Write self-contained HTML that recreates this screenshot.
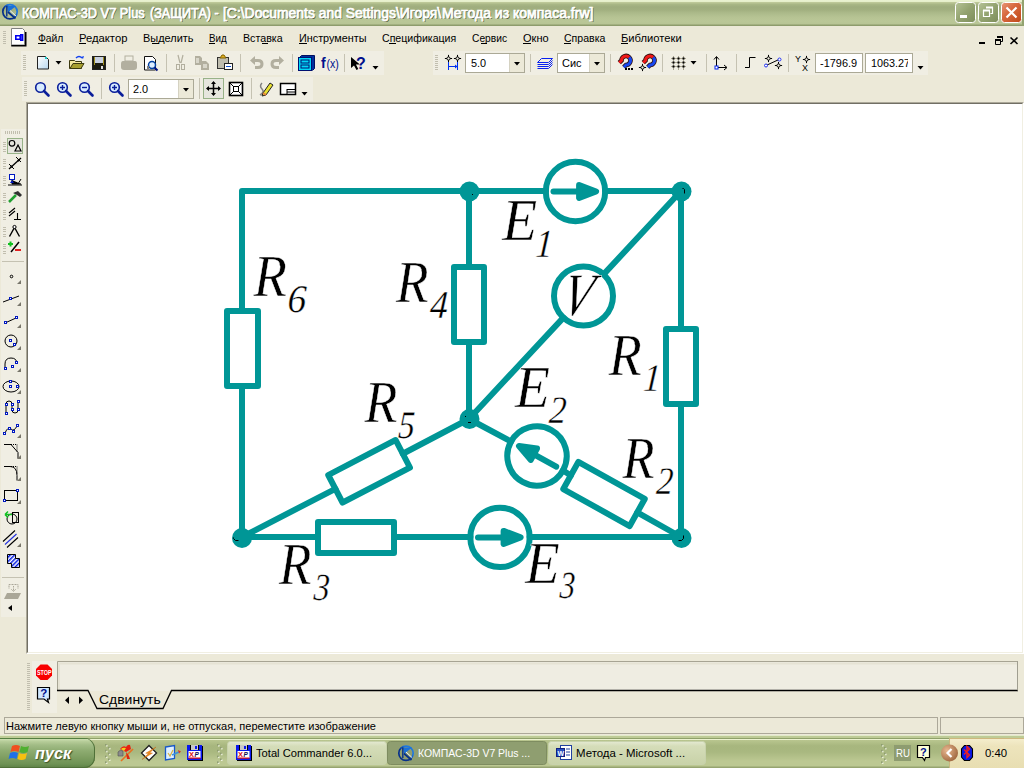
<!DOCTYPE html>
<html><head><meta charset="utf-8"><style>
*{box-sizing:border-box}
html,body{margin:0;padding:0}
body{width:1024px;height:768px;overflow:hidden;position:relative;background:#ECE9D8;font-family:"Liberation Sans",sans-serif;font-size:11px;color:#000}
.a{position:absolute}
.t{white-space:nowrap;line-height:1}
</style></head><body>
<svg width="0" height="0" style="position:absolute"><defs>
<linearGradient id="gOlive" x1="0" y1="0" x2="1" y2="1"><stop offset="0" stop-color="#B5C396"/><stop offset="0.5" stop-color="#93A370"/><stop offset="1" stop-color="#7D8D5A"/></linearGradient>
<linearGradient id="gRed" x1="0" y1="0" x2="1" y2="1"><stop offset="0" stop-color="#E89878"/><stop offset="0.4" stop-color="#D86A40"/><stop offset="1" stop-color="#C04818"/></linearGradient>
<linearGradient id="gDoc" x1="0" y1="0" x2="1" y2="1"><stop offset="0" stop-color="#fff"/><stop offset="1" stop-color="#B8D8F0"/></linearGradient>
<linearGradient id="gTask" x1="0" y1="0" x2="0" y2="1"><stop offset="0" stop-color="#E4E9D2"/><stop offset="0.2" stop-color="#D5DDB9"/><stop offset="1" stop-color="#C8D2A8"/></linearGradient>
<linearGradient id="gLogo" x1="1" y1="0" x2="0" y2="1"><stop offset="0.3" stop-color="#1E78E0"/><stop offset="0.6" stop-color="#06308A"/></linearGradient>
<radialGradient id="gBrown" cx="0.35" cy="0.35" r="0.7"><stop offset="0" stop-color="#E8B890"/><stop offset="1" stop-color="#A06840"/></radialGradient>
<pattern id="hatch" width="3" height="3" patternUnits="userSpaceOnUse" patternTransform="rotate(45)"><rect width="3" height="3" fill="#fff"/><rect width="1.5" height="3" fill="#0018E0"/></pattern>
</defs></svg>
<div class="a" style="left:0;top:0;width:1024px;height:26px;background:linear-gradient(#EAF2D2 0px,#E6EFCB 1.5px,#BDC898 2.5px,#A8B685 4.5px,#9FAD7E 7px,#A2B080 10px,#ACBA8A 13px,#B6C393 17px,#BAC797 21px,#B8C595 24px,#8E9C6C 25px,#8E9C6C 26px)"></div>
<div class="a" style="left:21px;top:51px;width:363px;height:24px;background:#F0EEE3"></div>
<div class="a" style="left:433px;top:51px;width:495px;height:24px;background:#F0EEE3"></div>
<div class="a" style="left:22px;top:77px;width:291px;height:24px;background:#F0EEE3"></div>
<div class="a" style="left:1px;top:129px;width:25px;height:488px;background:#F0EEE3"></div>
<div class="a" style="left:26px;top:102px;width:998px;height:552px;border-top:1px solid #ACA899;border-left:1px solid #ACA899;border-right:1px solid #fff;border-bottom:1px solid #fff;background:#fff"><div style="width:996px;height:550px;border-top:1px solid #716F64;border-left:1px solid #716F64;border-right:1px solid #F1EFE2;border-bottom:1px solid #F1EFE2"></div></div>
<div class="a" style="left:32px;top:661px;width:25px;height:52px;background:#F0EEE3"></div>
<div class="a" style="left:58px;top:661px;width:960px;height:30px;background:#EFEDE2"></div>
<div class="a" style="left:4px;top:717px;width:934px;height:17px;border:1px solid #ACA899"></div>
<div class="a" style="left:940px;top:717px;width:84px;height:17px;border:1px solid #ACA899"></div>
<div class="a" style="left:0;top:735px;width:1024px;height:33px;background:linear-gradient(#E2E9C9 0px,#E2E9C9 1px,#BECB96 1px,#BECB96 3px,#8FA16A 3px,#8FA16A 4px,#ECF2D0 4px,#ECF2D0 5px,#B9C68F 5px,#A7B67E 11px,#A9B880 17px,#BCC892 26px,#BCC892 31px,#96A470 32px)"></div>
<div class="a" style="left:0;top:738px;width:95px;height:30px;border-radius:0 11px 11px 0;background:linear-gradient(#557F42 0,#557F42 1px,#CFE0B4 1px,#B9CF9C 3px,#A2BC86 7px,#8DAB70 13px,#7D9D60 20px,#6E9254 26px,#5B8045 30px);box-shadow:inset -1px 0 0 #4F7038,inset 0 -1px 0 #4F7038"></div>
<div class="a" style="left:949px;top:738px;width:75px;height:30px;background:linear-gradient(#CDB87E 0,#CDB87E 1px,#F4EDCC 1px,#EDE4BC 8px,#E8DEB2);border-left:1px solid #C8B880"></div>
<svg class="a" style="left:0;top:0" width="1024" height="768" viewBox="0 0 1024 768">
<circle cx="10" cy="11.75" r="7.2" fill="none" stroke="url(#gLogo)" stroke-width="1.7"/>
<path d="M7,6 h9 l-8,6.5z" fill="#1A70D8"/><path d="M6.8,6 v10.5" stroke="#06308A" stroke-width="1.4"/><path d="M8,12 l7.5,6.5" stroke="#06308A" stroke-width="1.8"/><path d="M10,10.5 l6,5.5" stroke="#E8F0FF" stroke-width="1"/>
<rect x="955.5" y="2.5" width="20" height="20" rx="3" fill="url(#gOlive)" stroke="#fff" stroke-width="1"/>
<rect x="978.5" y="2.5" width="20" height="20" rx="3" fill="url(#gOlive)" stroke="#fff" stroke-width="1"/>
<rect x="1001.5" y="2.5" width="20" height="20" rx="3" fill="url(#gRed)" stroke="#fff" stroke-width="1"/>
<rect x="960" y="15" width="7" height="3" fill="#fff"/>
<path d="M986.5,7.5 h6 v6 h-2 M983.5,10.5 h6 v6 h-6 z" fill="none" stroke="#fff" stroke-width="1.2"/><rect x="983" y="9.5" width="7" height="2" fill="#fff"/><rect x="986" y="6.5" width="7" height="2" fill="#fff"/>
<path d="M1006.5,7.5 l10,10 M1016.5,7.5 l-10,10" stroke="#fff" stroke-width="2.2"/>
<rect x="1022" y="0" width="2" height="26" fill="#93A370"/>
<rect x="3" y="31" width="3" height="1" fill="#C1BEAE"/><rect x="3" y="33" width="3" height="1" fill="#C1BEAE"/><rect x="3" y="35" width="3" height="1" fill="#C1BEAE"/><rect x="3" y="37" width="3" height="1" fill="#C1BEAE"/><rect x="3" y="39" width="3" height="1" fill="#C1BEAE"/><rect x="3" y="41" width="3" height="1" fill="#C1BEAE"/><rect x="3" y="43" width="3" height="1" fill="#C1BEAE"/>
<path d="M11.5,28.5 h11 l2,2 v14.5 h-13 z" fill="#fff" stroke="#808080"/><path d="M25.75,32 v13.75 h-14.5" stroke="#000" stroke-width="1.5" fill="none"/><path d="M15.8,35.8 h4.4 v3.4 h-4.4z M20.8,34.8 h1.8 v5.4 h-1.8z" stroke="#0000F0" stroke-width="1.6" fill="#fff"/>
<rect x="979" y="42" width="6" height="2" fill="#000"/>
<path d="M997.5,36.5 h5 v5 h-2 M995.5,39.5 h5 v5 h-5 z" fill="none" stroke="#000"/><rect x="995" y="39" width="6" height="2" fill="#000"/><rect x="997" y="36" width="6" height="2" fill="#000"/>
<path d="M1010.5,37.5 l7,6.5 M1017.5,37.5 l-7,6.5" stroke="#000" stroke-width="1.6"/>
<rect x="23" y="55" width="3" height="1" fill="#C1BEAE"/><rect x="23" y="57" width="3" height="1" fill="#C1BEAE"/><rect x="23" y="59" width="3" height="1" fill="#C1BEAE"/><rect x="23" y="61" width="3" height="1" fill="#C1BEAE"/><rect x="23" y="63" width="3" height="1" fill="#C1BEAE"/><rect x="23" y="65" width="3" height="1" fill="#C1BEAE"/><rect x="23" y="67" width="3" height="1" fill="#C1BEAE"/><rect x="23" y="69" width="3" height="1" fill="#C1BEAE"/>
<path d="M37.5,56.5 h8 l3,3 v9.5 h-11 z" fill="url(#gDoc)" stroke="#222"/><rect x="45" y="57" width="2" height="2" fill="#2CC"/>
<path d="M55.5,61h6l-3,3.5z" fill="#000"/>
<path d="M69.5,60.5 h5 l1,1 h6 v7 h-12 z" fill="#F4E9A0" stroke="#3C3A10"/><path d="M70,68.5 l3,-5 h11 l-3,5 z" fill="#A8A030" stroke="#3C3A10"/><path d="M76,58 q3,-3 6,0" stroke="#1040F0" stroke-width="1.5" fill="none"/><path d="M81,57 l2,2 l1,-3z" fill="#1040F0"/>
<rect x="92.5" y="56.5" width="13" height="13" fill="#1C1C10" stroke="#222"/><rect x="95" y="57" width="8" height="6" fill="#C8D0E0"/><rect x="94" y="57" width="1" height="8" fill="#A09020"/><rect x="103" y="57" width="1" height="8" fill="#A09020"/><rect x="101" y="66" width="2" height="3" fill="#E0E0E0"/>
<rect x="114" y="54" width="1" height="18" fill="#C5C2B2"/>
<path d="M123,61 h12 q2,0 2,3 v3 q0,3 -3,3 h-10 q-3,0 -3,-3 v-3 q0,-3 2,-3z" fill="#B2AF9F"/><rect x="125" y="56" width="8" height="5" fill="none" stroke="#B2AF9F"/>
<path d="M144.5,56.5 h8 l3,3 v10.5 h-11 z" fill="#fff" stroke="#111"/><circle cx="152" cy="65" r="3.5" fill="#DDEEFF" stroke="#0040A0" stroke-width="1.5"/><path d="M154.5,67.5 l3,3" stroke="#001080" stroke-width="2"/><rect x="147" y="66" width="2" height="3" fill="#808080"/>
<rect x="166" y="54" width="1" height="18" fill="#C5C2B2"/>
<path d="M178,55 l2,8 M183,55 l-2,8" stroke="#B2AF9F" stroke-width="1.2"/><rect x="176.5" y="64.5" width="3" height="5" fill="none" stroke="#B2AF9F"/><rect x="181.5" y="64.5" width="3" height="5" fill="none" stroke="#B2AF9F"/>
<path d="M195,56 h5 l2,2 v7 h-7z" fill="#B2AF9F"/><path d="M201,61 h5 l3,3 v6 h-8z" fill="#B2AF9F"/><rect x="196" y="58" width="3" height="5" fill="#D8D6CA"/><rect x="203" y="64" width="4" height="4" fill="#D8D6CA"/>
<rect x="217.5" y="57.5" width="11" height="11" fill="#BEBCAE" stroke="#333"/><path d="M220,58 l2,-3 h2 l2,3z" fill="#E0B020" stroke="#806000"/><rect x="224.5" y="63.5" width="8" height="6" fill="#fff" stroke="#222"/><rect x="226" y="66" width="5" height="1" fill="#1050D0"/>
<rect x="240" y="54" width="1" height="18" fill="#C5C2B2"/>
<path d="M254,60.5 h4 q4,0 4,3.5 q0,3.5 -4,3.5 h-3" stroke="#B2AF9F" stroke-width="3" fill="none"/><path d="M250,60.5 l5,-4.5 v9z" fill="#B2AF9F"/>
<path d="M280,60.5 h-4 q-4,0 -4,3.5 q0,3.5 4,3.5 h3" stroke="#B2AF9F" stroke-width="3" fill="none"/><path d="M284,60.5 l-5,-4.5 v9z" fill="#B2AF9F"/>
<rect x="292" y="54" width="1" height="18" fill="#C5C2B2"/>
<path d="M299.5,57.5 l2,-2 h13 v13 l-2,2" fill="#0030A0" stroke="#001060"/><rect x="298.5" y="57.5" width="13" height="13" fill="#00D8F8" stroke="#001070"/><rect x="301" y="60" width="8" height="3" fill="none" stroke="#001070"/><rect x="301" y="65" width="8" height="3" fill="none" stroke="#001070"/>
<text x="321" y="68" font-family="Liberation Sans" font-weight="bold" font-size="14" fill="#00108C">f</text><text x="0" y="68" font-family="Liberation Sans" font-size="12.5" fill="#00108C" transform="translate(326.5,0) scale(0.85,1)">(x)</text>
<rect x="344" y="54" width="1" height="18" fill="#C5C2B2"/>
<path d="M351,57 v11 l3,-2.5 l2.5,4.5 l1.8,-1 l-2.4,-4.4 h4z" fill="#000"/>
<text x="356" y="68.5" font-family="Liberation Sans" font-weight="bold" font-size="16" fill="#00108C">?</text>
<path d="M372.5,66h6l-3,3.5z" fill="#000"/>
<rect x="435" y="55" width="3" height="1" fill="#C1BEAE"/><rect x="435" y="57" width="3" height="1" fill="#C1BEAE"/><rect x="435" y="59" width="3" height="1" fill="#C1BEAE"/><rect x="435" y="61" width="3" height="1" fill="#C1BEAE"/><rect x="435" y="63" width="3" height="1" fill="#C1BEAE"/><rect x="435" y="65" width="3" height="1" fill="#C1BEAE"/><rect x="435" y="67" width="3" height="1" fill="#C1BEAE"/><rect x="435" y="69" width="3" height="1" fill="#C1BEAE"/>
<circle cx="448.5" cy="58.5" r="1.6" fill="none" stroke="#000" stroke-width="1"/><path d="M444.9,58.5H446.9M450.1,58.5H452.1M448.5,54.9V56.9M448.5,60.1V62.1" stroke="#000" stroke-width="1"/><circle cx="457.5" cy="58.5" r="1.6" fill="none" stroke="#000" stroke-width="1"/><path d="M453.9,58.5H455.9M459.1,58.5H461.1M457.5,54.9V56.9M457.5,60.1V62.1" stroke="#000" stroke-width="1"/><path d="M448.5,62v8M457.5,62v8M448,66.5h10" stroke="#0030F0" fill="none"/><path d="M455,64.5l2.5,2l-2.5,2z" fill="#0030F0"/>
<rect x="465.5" y="53.5" width="59" height="19" fill="#fff" stroke="#ABA996"/><rect x="509" y="54" width="15" height="18" fill="#ECE9D8"/><rect x="509" y="54" width="1" height="18" fill="#D5D2C2"/><path d="M514.0,62.0h6l-3,3.5z" fill="#000"/>
<rect x="530" y="54" width="1" height="18" fill="#C5C2B2"/>
<g stroke="#0820F0" fill="none" stroke-width="1"><path d="M541.5,58.5h11l-4,4h-11z"/><path d="M537.5,64.5h11l4,-4"/><path d="M537.5,66.5h11l4,-4"/><path d="M537.5,68.5h11l4,-4"/></g>
<rect x="557.5" y="53.5" width="47" height="19" fill="#fff" stroke="#ABA996"/><rect x="589" y="54" width="15" height="18" fill="#ECE9D8"/><rect x="589" y="54" width="1" height="18" fill="#D5D2C2"/><path d="M594.0,62.0h6l-3,3.5z" fill="#000"/>
<rect x="610" y="54" width="1" height="18" fill="#C5C2B2"/>
<path d="M619.30,62.70 L621.50,60.50 A4.5,4.5 0 0 1 629.18,57.32 A4.5,4.5 0 0 1 626.00,65.00 L623.80,67.20" stroke="#301010" stroke-width="4.6" fill="none"/><path d="M619.30,62.70 L621.50,60.50 A4.5,4.5 0 0 1 629.18,57.32" stroke="#F01818" stroke-width="3" fill="none"/><path d="M629.18,57.32 A4.5,4.5 0 0 1 626.00,65.00 L623.80,67.20" stroke="#1848F0" stroke-width="3" fill="none"/><rect x="625" y="68" width="2" height="2" fill="#000"/><rect x="628" y="68" width="2" height="2" fill="#000"/><rect x="631" y="68" width="2" height="2" fill="#000"/>
<path d="M643.30,62.70 L645.50,60.50 A4.5,4.5 0 0 1 653.18,57.32 A4.5,4.5 0 0 1 650.00,65.00 L647.80,67.20" stroke="#301010" stroke-width="4.6" fill="none"/><path d="M643.30,62.70 L645.50,60.50 A4.5,4.5 0 0 1 653.18,57.32" stroke="#F01818" stroke-width="3" fill="none"/><path d="M653.18,57.32 A4.5,4.5 0 0 1 650.00,65.00 L647.80,67.20" stroke="#1848F0" stroke-width="3" fill="none"/><circle cx="642.5" cy="67.5" r="1.6" fill="none" stroke="#000" stroke-width="1"/><path d="M638.9,67.5H640.9M644.1,67.5H646.1M642.5,63.9V65.9M642.5,69.1V71.1" stroke="#000" stroke-width="1"/>
<rect x="662" y="54" width="1" height="18" fill="#C5C2B2"/>
<g stroke="#ABA792" stroke-width="1"><path d="M671,58.5h15M671,62.5h15M671,66.5h15M673.5,56v14M678.5,56v14M683.5,56v14"/></g><rect x="672.5" y="57.5" width="2" height="2" fill="#000"/><rect x="672.5" y="61.5" width="2" height="2" fill="#000"/><rect x="672.5" y="65.5" width="2" height="2" fill="#000"/><rect x="677.5" y="57.5" width="2" height="2" fill="#000"/><rect x="677.5" y="61.5" width="2" height="2" fill="#000"/><rect x="677.5" y="65.5" width="2" height="2" fill="#000"/><rect x="682.5" y="57.5" width="2" height="2" fill="#000"/><rect x="682.5" y="61.5" width="2" height="2" fill="#000"/><rect x="682.5" y="65.5" width="2" height="2" fill="#000"/>
<path d="M690.5,61h6l-3,3.5z" fill="#000"/>
<rect x="706" y="54" width="1" height="18" fill="#C5C2B2"/>
<path d="M716.5,68 v-11 M714,59.5 l2.5,-3 l2.5,3 M716.5,67.5 h10 M724,65 l3,2.5 l-3,2.5" stroke="#000" fill="none"/><rect x="715" y="66" width="3" height="3" fill="#fff" stroke="#0020F0"/>
<rect x="736" y="54" width="1" height="18" fill="#C5C2B2"/>
<path d="M745,67.5 h4.5 v-10 h6" stroke="#000" fill="none"/>
<circle cx="768.5" cy="58.5" r="1.6" fill="none" stroke="#000" stroke-width="1"/><path d="M764.9,58.5H766.9M770.1,58.5H772.1M768.5,54.9V56.9M768.5,60.1V62.1" stroke="#000" stroke-width="1"/><circle cx="778.5" cy="65.5" r="1.6" fill="none" stroke="#000" stroke-width="1"/><path d="M774.9,65.5H776.9M780.1,65.5H782.1M778.5,61.9V63.9M778.5,67.1V69.1" stroke="#000" stroke-width="1"/><path d="M766,65.5 l13,-6" stroke="#000"/><circle cx="766" cy="65.5" r="1.5" fill="#fff" stroke="#2030F0"/><circle cx="779.5" cy="59.5" r="1.5" fill="#fff" stroke="#2030F0"/>
<rect x="788" y="54" width="1" height="18" fill="#C5C2B2"/>
<text x="795" y="62" font-family="Liberation Sans" font-size="9" fill="#000">Y</text><text x="802" y="71" font-family="Liberation Sans" font-size="9" fill="#000">X</text><circle cx="806.5" cy="59.5" r="1.6" fill="none" stroke="#000" stroke-width="1"/><path d="M802.9,59.5H804.9M808.1,59.5H810.1M806.5,55.9V57.9M806.5,61.1V63.1" stroke="#000" stroke-width="1"/>
<rect x="815.5" y="53.5" width="47" height="19" fill="#fff" stroke="#ABA996"/>
<rect x="865.5" y="53.5" width="47" height="19" fill="#fff" stroke="#ABA996"/>
<path d="M917.5,66h6l-3,3.5z" fill="#000"/>
<rect x="24" y="81" width="3" height="1" fill="#C1BEAE"/><rect x="24" y="83" width="3" height="1" fill="#C1BEAE"/><rect x="24" y="85" width="3" height="1" fill="#C1BEAE"/><rect x="24" y="87" width="3" height="1" fill="#C1BEAE"/><rect x="24" y="89" width="3" height="1" fill="#C1BEAE"/><rect x="24" y="91" width="3" height="1" fill="#C1BEAE"/><rect x="24" y="93" width="3" height="1" fill="#C1BEAE"/><rect x="24" y="95" width="3" height="1" fill="#C1BEAE"/>
<circle cx="40.5" cy="87.5" r="4.8" fill="#D8ECFF" stroke="#0A1E9A" stroke-width="1.6"/><path d="M44,91 l4.5,4.5" stroke="#0A1E9A" stroke-width="2.6" stroke-linecap="round"/>
<circle cx="62.5" cy="87.5" r="4.8" fill="#D8ECFF" stroke="#0A1E9A" stroke-width="1.6"/><path d="M66,91 l4.5,4.5" stroke="#0A1E9A" stroke-width="2.6" stroke-linecap="round"/><path d="M60,87.5h5M62.5,85v5" stroke="#0A1E9A" stroke-width="1.4"/>
<circle cx="84.5" cy="87.5" r="4.8" fill="#D8ECFF" stroke="#0A1E9A" stroke-width="1.6"/><path d="M88,91 l4.5,4.5" stroke="#0A1E9A" stroke-width="2.6" stroke-linecap="round"/><path d="M82,87.5h5" stroke="#0A1E9A" stroke-width="1.4"/>
<rect x="101" y="78" width="1" height="21" fill="#C5C2B2"/>
<circle cx="114.5" cy="87.5" r="4.8" fill="#D8ECFF" stroke="#0A1E9A" stroke-width="1.6"/><path d="M118,91 l4.5,4.5" stroke="#0A1E9A" stroke-width="2.6" stroke-linecap="round"/><path d="M112,87.5h5M114.5,85v5" stroke="#0A1E9A" stroke-width="1.4"/>
<rect x="128.5" y="79.5" width="65" height="19" fill="#fff" stroke="#ABA996"/><rect x="178" y="80" width="15" height="18" fill="#ECE9D8"/><rect x="178" y="80" width="1" height="18" fill="#D5D2C2"/><path d="M183.0,88.0h6l-3,3.5z" fill="#000"/>
<rect x="199" y="78" width="1" height="21" fill="#C5C2B2"/>
<rect x="203.5" y="78.5" width="20" height="20" fill="#E6E6DE" stroke="#98B288"/>
<path d="M213.5,82 v13 M207,88.5 h13" stroke="#000" stroke-width="1.5"/><path d="M211,84 l2.5,-3 l2.5,3z M211,93 l2.5,3 l2.5,-3z M209,86 l-3,2.5 l3,2.5z M218,86 l3,2.5 l-3,2.5z" fill="#000"/>
<rect x="229.5" y="82.5" width="13" height="13" fill="#fff" stroke="#000" stroke-width="1.6"/><rect x="233.5" y="86.5" width="5" height="5" fill="none" stroke="#000"/><path d="M230,83 l4,4 M242,83 l-4,4 M230,95 l4,-4 M242,95 l-4,-4" stroke="#000"/>
<rect x="251" y="78" width="1" height="21" fill="#C5C2B2"/>
<path d="M262,83 q-3,3 0,6 q3,3 -2,6" stroke="#808080" stroke-width="1.5" fill="none"/><path d="M263,93 l7,-10 l3,2 l-7,10 l-4,1z" fill="#E8E030" stroke="#222"/><path d="M263,93l3,2" stroke="#E08040" stroke-width="2"/>
<rect x="280.5" y="83.5" width="15" height="11" fill="#fff" stroke="#000" stroke-width="1.5"/><path d="M287,89.5 h8 M287,92 h8 M287,89 v5.5" stroke="#000"/>
<path d="M301.5,92h6l-3,3.5z" fill="#000"/>
<rect x="5" y="131" width="1" height="3" fill="#C1BEAE"/><rect x="7" y="131" width="1" height="3" fill="#C1BEAE"/><rect x="9" y="131" width="1" height="3" fill="#C1BEAE"/><rect x="11" y="131" width="1" height="3" fill="#C1BEAE"/><rect x="13" y="131" width="1" height="3" fill="#C1BEAE"/><rect x="15" y="131" width="1" height="3" fill="#C1BEAE"/><rect x="17" y="131" width="1" height="3" fill="#C1BEAE"/><rect x="19" y="131" width="1" height="3" fill="#C1BEAE"/>
<rect x="7.5" y="138.5" width="15" height="15" fill="#E6E6DE" stroke="#98B288"/>
<rect x="3" y="142" width="3" height="1" fill="#C1BEAE"/><rect x="3" y="144" width="3" height="1" fill="#C1BEAE"/><rect x="3" y="146" width="3" height="1" fill="#C1BEAE"/><rect x="3" y="149" width="3" height="1" fill="#C1BEAE"/><rect x="3" y="151" width="3" height="1" fill="#C1BEAE"/>
<rect x="3" y="159" width="3" height="1" fill="#C1BEAE"/><rect x="3" y="161" width="3" height="1" fill="#C1BEAE"/><rect x="3" y="163" width="3" height="1" fill="#C1BEAE"/><rect x="3" y="166" width="3" height="1" fill="#C1BEAE"/><rect x="3" y="168" width="3" height="1" fill="#C1BEAE"/>
<rect x="3" y="176" width="3" height="1" fill="#C1BEAE"/><rect x="3" y="178" width="3" height="1" fill="#C1BEAE"/><rect x="3" y="180" width="3" height="1" fill="#C1BEAE"/><rect x="3" y="183" width="3" height="1" fill="#C1BEAE"/><rect x="3" y="185" width="3" height="1" fill="#C1BEAE"/>
<rect x="3" y="193" width="3" height="1" fill="#C1BEAE"/><rect x="3" y="195" width="3" height="1" fill="#C1BEAE"/><rect x="3" y="197" width="3" height="1" fill="#C1BEAE"/><rect x="3" y="200" width="3" height="1" fill="#C1BEAE"/><rect x="3" y="202" width="3" height="1" fill="#C1BEAE"/>
<rect x="3" y="210" width="3" height="1" fill="#C1BEAE"/><rect x="3" y="212" width="3" height="1" fill="#C1BEAE"/><rect x="3" y="214" width="3" height="1" fill="#C1BEAE"/><rect x="3" y="217" width="3" height="1" fill="#C1BEAE"/><rect x="3" y="219" width="3" height="1" fill="#C1BEAE"/>
<rect x="3" y="227" width="3" height="1" fill="#C1BEAE"/><rect x="3" y="229" width="3" height="1" fill="#C1BEAE"/><rect x="3" y="231" width="3" height="1" fill="#C1BEAE"/><rect x="3" y="234" width="3" height="1" fill="#C1BEAE"/><rect x="3" y="236" width="3" height="1" fill="#C1BEAE"/>
<rect x="3" y="244" width="3" height="1" fill="#C1BEAE"/><rect x="3" y="246" width="3" height="1" fill="#C1BEAE"/><rect x="3" y="248" width="3" height="1" fill="#C1BEAE"/><rect x="3" y="251" width="3" height="1" fill="#C1BEAE"/><rect x="3" y="253" width="3" height="1" fill="#C1BEAE"/>
<circle cx="12" cy="143.3" r="2.8" fill="none" stroke="#000" stroke-width="1.2"/><path d="M18,145 l3,6 h-6z" fill="none" stroke="#000" stroke-width="1.2"/>
<path d="M9,169 l12,-11" stroke="#000" stroke-width="1.3"/><path d="M9,164 l5,5 M16,157 l5,5" stroke="#000"/><path d="M10,168 l3,-1 l-2,-2z M20,159 l-3,1 l2,2z" fill="#000"/>
<rect x="9.5" y="174.5" width="5" height="5" fill="#fff" stroke="#0018C0"/><path d="M12,180 v4 h9 M8,185h14" stroke="#000"/><path d="M10,183 l2,-3 l2,3z" fill="#0018C0"/><path d="M16,182 l2,2 l3,-5" stroke="#000" fill="none"/>
<path d="M13,193 l5,-2 l4,4 l-2,2 l-3,-2z" fill="#303030"/><path d="M16,195 l-7,7" stroke="#20A030" stroke-width="2.5"/>
<path d="M9,213 l6,-5 M9,216 l6,-5 M17.5,213 v7 M14,219.5h7" stroke="#000" stroke-width="1.1" fill="none"/>
<path d="M9.5,236.5 l5,-9 l5,9" stroke="#000" stroke-width="1.4" fill="none"/><circle cx="14.5" cy="227" r="1.6" fill="#fff" stroke="#000"/>
<path d="M11,252 l8,-10" stroke="#000" stroke-width="1.5"/><path d="M8,244h5M10.5,241.5v5" stroke="#10C020" stroke-width="2"/><rect x="15" y="249" width="6" height="2" fill="#E02020"/>
<rect x="2" y="261" width="22" height="1" fill="#C5C2B2"/>
<circle cx="11.5" cy="276.5" r="1.3" fill="none" stroke="#000"/><path d="M17,284 h4 v-4z" fill="#77756A"/>
<path d="M3,302 l16,-6" stroke="#000"/><rect x="9.5" y="297.5" width="2" height="2" fill="#fff" stroke="#0018C0"/><path d="M17,306 h4 v-4z" fill="#77756A"/>
<path d="M5,323 l11,-5" stroke="#000"/><rect x="4.5" y="321.5" width="2" height="2" fill="#fff" stroke="#0018C0"/><rect x="15.5" y="316.5" width="2" height="2" fill="#fff" stroke="#0018C0"/><path d="M17,328 h4 v-4z" fill="#77756A"/>
<circle cx="11" cy="341" r="6" fill="none" stroke="#000"/><rect x="9.5" y="339.5" width="2" height="2" fill="#fff" stroke="#0018C0"/><rect x="13.5" y="343.5" width="2" height="2" fill="#fff" stroke="#0018C0"/><path d="M17,350 h4 v-4z" fill="#77756A"/>
<path d="M5,368 v-4 q0,-6 6,-6 q6,0 6,6" stroke="#000" fill="none"/><rect x="4.5" y="367.5" width="2" height="2" fill="#fff" stroke="#0018C0"/><rect x="11.5" y="365.5" width="2" height="2" fill="#fff" stroke="#0018C0"/><rect x="15.5" y="361.5" width="2" height="2" fill="#fff" stroke="#0018C0"/><path d="M17,372 h4 v-4z" fill="#77756A"/>
<ellipse cx="11" cy="386.5" rx="8" ry="5.5" fill="none" stroke="#000"/><rect x="9.5" y="380.5" width="2" height="2" fill="#fff" stroke="#0018C0"/><rect x="9.5" y="385.5" width="2" height="2" fill="#fff" stroke="#0018C0"/><rect x="16.5" y="385.5" width="2" height="2" fill="#fff" stroke="#0018C0"/><path d="M17,394 h4 v-4z" fill="#77756A"/>
<path d="M6,414 v-10 q0,-3 3,-3 q3,0 3,3 v6 q0,3 3,3 q3,0 3,-3 v-8" stroke="#000" fill="none"/><rect x="5.5" y="403.5" width="2" height="2" fill="#fff" stroke="#0018C0"/><rect x="5.5" y="412.5" width="2" height="2" fill="#fff" stroke="#0018C0"/><rect x="11.5" y="403.5" width="2" height="2" fill="#fff" stroke="#0018C0"/><rect x="11.5" y="408.5" width="2" height="2" fill="#fff" stroke="#0018C0"/><rect x="17.5" y="400.5" width="2" height="2" fill="#fff" stroke="#0018C0"/><rect x="17.5" y="408.5" width="2" height="2" fill="#fff" stroke="#0018C0"/>
<path d="M5,433 q3,-7 6,-4 q3,3 6,-3" stroke="#000" fill="none"/><rect x="3.5" y="432.5" width="2" height="2" fill="#fff" stroke="#0018C0"/><rect x="8.5" y="427.5" width="2" height="2" fill="#fff" stroke="#0018C0"/><rect x="12.5" y="430.5" width="2" height="2" fill="#fff" stroke="#0018C0"/><rect x="16.5" y="424.5" width="2" height="2" fill="#fff" stroke="#0018C0"/><path d="M17,438 h4 v-4z" fill="#77756A"/>
<path d="M4,444.5 h7 l7,8 v6" stroke="#000" fill="none"/><path d="M11,444.5 h6 v8" stroke="#000" stroke-dasharray="1,1" fill="none"/><path d="M17,459 h4 v-4z" fill="#77756A"/>
<path d="M4,466.5 h6 q7,0 7,9 v5" stroke="#000" fill="none"/><path d="M11,466.5 h6 v8" stroke="#000" stroke-dasharray="1,1" fill="none"/><path d="M17,481 h4 v-4z" fill="#77756A"/>
<rect x="4.5" y="490.5" width="13" height="10" fill="none" stroke="#000"/><rect x="3.5" y="499.5" width="2" height="2" fill="#fff" stroke="#0018C0"/><rect x="16.5" y="489.5" width="2" height="2" fill="#fff" stroke="#0018C0"/><path d="M17,504 h4 v-4z" fill="#77756A"/>
<circle cx="12" cy="519" r="5" fill="none" stroke="#000"/><rect x="12.5" y="512.5" width="6" height="10" fill="none" stroke="#000"/><path d="M5,514.5 h7 M5,514.5 l3,-3 M5,514.5 l3,3" stroke="#10C020" stroke-width="1.5"/>
<path d="M3,541.5 l12,-11 M7,547.5 l11,-10" stroke="#000" stroke-width="1.1"/><path d="M5,544.5 l11.5,-10.5" stroke="#2030E0" stroke-width="1.1"/><path d="M17,547 h4 v-4z" fill="#77756A"/>
<path d="M7.5,554.5 h8 v4 h4 v9 h-8 v-4 h-4 z" fill="url(#hatch)" stroke="#000"/>
<rect x="2" y="577" width="22" height="1" fill="#C5C2B2"/>
<path d="M9,584.5 h9 v4 M9,584.5 v4 M13.5,586 v5 M11,589 l2.5,2.5 l2.5,-2.5" stroke="#AAA798" fill="none" stroke-dasharray="1,0.5"/><path d="M7,593 h14 l-3,6 h-14z" fill="#AAA798"/>
<path d="M8,608 l4,-3 v6z" fill="#000"/>
<rect x="27" y="663" width="3" height="1" fill="#C1BEAE"/><rect x="27" y="665" width="3" height="1" fill="#C1BEAE"/><rect x="27" y="667" width="3" height="1" fill="#C1BEAE"/><rect x="27" y="669" width="3" height="1" fill="#C1BEAE"/><rect x="27" y="671" width="3" height="1" fill="#C1BEAE"/><rect x="27" y="673" width="3" height="1" fill="#C1BEAE"/><rect x="27" y="675" width="3" height="1" fill="#C1BEAE"/><rect x="27" y="677" width="3" height="1" fill="#C1BEAE"/><rect x="27" y="679" width="3" height="1" fill="#C1BEAE"/><rect x="27" y="681" width="3" height="1" fill="#C1BEAE"/><rect x="27" y="683" width="3" height="1" fill="#C1BEAE"/><rect x="27" y="685" width="3" height="1" fill="#C1BEAE"/><rect x="27" y="687" width="3" height="1" fill="#C1BEAE"/><rect x="27" y="689" width="3" height="1" fill="#C1BEAE"/><rect x="27" y="691" width="3" height="1" fill="#C1BEAE"/><rect x="27" y="693" width="3" height="1" fill="#C1BEAE"/><rect x="27" y="695" width="3" height="1" fill="#C1BEAE"/><rect x="27" y="697" width="3" height="1" fill="#C1BEAE"/><rect x="27" y="699" width="3" height="1" fill="#C1BEAE"/><rect x="27" y="701" width="3" height="1" fill="#C1BEAE"/><rect x="27" y="703" width="3" height="1" fill="#C1BEAE"/><rect x="27" y="705" width="3" height="1" fill="#C1BEAE"/><rect x="27" y="707" width="3" height="1" fill="#C1BEAE"/><rect x="27" y="709" width="3" height="1" fill="#C1BEAE"/>
<path d="M40.5,664.5 h7 l4.5,4.5 v6.5 l-4.5,4.5 h-7 l-4.5,-4.5 v-6.5z" fill="#F80000"/><text x="0" y="675" font-family="Liberation Sans" font-weight="bold" font-size="6.6" fill="#fff" transform="translate(37,0) scale(0.82,1)">STOP</text>
<path d="M37.5,687.5 h12 v11.5 h-2 l1,3.5 l-4.5,-3.5 h-6.5z" fill="#D0E8FF" stroke="#000" stroke-width="1.2"/><text x="40.3" y="697.3" font-family="Liberation Sans" font-weight="bold" font-size="11.5" fill="#00108C">?</text>
<path d="M57.5,690 v-28.5 h960" stroke="#A7A493" fill="none"/><path d="M59,690 v-26.5 h958" stroke="#E6E3D4" stroke-width="2" fill="none"/>
<path d="M57,690.5 H88 L97,708.5 H163 L171.5,690.5 H1018" stroke="#000" stroke-width="1.3" fill="none"/>
<path d="M1017.5,661 v29.5" stroke="#A09E90" fill="none"/>
<path d="M69,696.5 v7.5 l-4,-3.75z M79,696.5 v7.5 l4,-3.75z" fill="#000"/>
<g>
<path d="M12,746 q4,-2 8,0 l-1.5,6 q-4,-2 -8,0z" fill="#F05020"/><path d="M21,746 q4,2 8,0 l-1.5,6 q-4,2 -8,0z" fill="#50B030"/><path d="M10,753 q4,-2 8,0 l-1.5,6 q-4,-2 -8,0z" fill="#2070E8"/><path d="M19,753 q4,2 8,0 l-1.5,6 q-4,2 -8,0z" fill="#F8C010"/>
<rect x="218" y="745.0" width="1.5" height="1.5" fill="#F4F7E6"/><rect x="217" y="744.0" width="1.6" height="1.6" fill="#8E9C72"/><rect x="221" y="747.9" width="1.5" height="1.5" fill="#F4F7E6"/><rect x="220" y="746.9" width="1.6" height="1.6" fill="#8E9C72"/><rect x="218" y="750.8" width="1.5" height="1.5" fill="#F4F7E6"/><rect x="217" y="749.8" width="1.6" height="1.6" fill="#8E9C72"/><rect x="221" y="753.7" width="1.5" height="1.5" fill="#F4F7E6"/><rect x="220" y="752.7" width="1.6" height="1.6" fill="#8E9C72"/><rect x="218" y="756.6" width="1.5" height="1.5" fill="#F4F7E6"/><rect x="217" y="755.6" width="1.6" height="1.6" fill="#8E9C72"/><rect x="221" y="759.5" width="1.5" height="1.5" fill="#F4F7E6"/><rect x="220" y="758.5" width="1.6" height="1.6" fill="#8E9C72"/><rect x="218" y="762.4" width="1.5" height="1.5" fill="#F4F7E6"/><rect x="217" y="761.4" width="1.6" height="1.6" fill="#8E9C72"/>
<rect x="106" y="745.0" width="1.5" height="1.5" fill="#F4F7E6"/><rect x="105" y="744.0" width="1.6" height="1.6" fill="#8E9C72"/><rect x="109" y="747.9" width="1.5" height="1.5" fill="#F4F7E6"/><rect x="108" y="746.9" width="1.6" height="1.6" fill="#8E9C72"/><rect x="106" y="750.8" width="1.5" height="1.5" fill="#F4F7E6"/><rect x="105" y="749.8" width="1.6" height="1.6" fill="#8E9C72"/><rect x="109" y="753.7" width="1.5" height="1.5" fill="#F4F7E6"/><rect x="108" y="752.7" width="1.6" height="1.6" fill="#8E9C72"/><rect x="106" y="756.6" width="1.5" height="1.5" fill="#F4F7E6"/><rect x="105" y="755.6" width="1.6" height="1.6" fill="#8E9C72"/><rect x="109" y="759.5" width="1.5" height="1.5" fill="#F4F7E6"/><rect x="108" y="758.5" width="1.6" height="1.6" fill="#8E9C72"/><rect x="106" y="762.4" width="1.5" height="1.5" fill="#F4F7E6"/><rect x="105" y="761.4" width="1.6" height="1.6" fill="#8E9C72"/>
<rect x="882" y="745.0" width="1.5" height="1.5" fill="#F4F7E6"/><rect x="881" y="744.0" width="1.6" height="1.6" fill="#8E9C72"/><rect x="885" y="747.9" width="1.5" height="1.5" fill="#F4F7E6"/><rect x="884" y="746.9" width="1.6" height="1.6" fill="#8E9C72"/><rect x="882" y="750.8" width="1.5" height="1.5" fill="#F4F7E6"/><rect x="881" y="749.8" width="1.6" height="1.6" fill="#8E9C72"/><rect x="885" y="753.7" width="1.5" height="1.5" fill="#F4F7E6"/><rect x="884" y="752.7" width="1.6" height="1.6" fill="#8E9C72"/><rect x="882" y="756.6" width="1.5" height="1.5" fill="#F4F7E6"/><rect x="881" y="755.6" width="1.6" height="1.6" fill="#8E9C72"/><rect x="885" y="759.5" width="1.5" height="1.5" fill="#F4F7E6"/><rect x="884" y="758.5" width="1.6" height="1.6" fill="#8E9C72"/><rect x="882" y="762.4" width="1.5" height="1.5" fill="#F4F7E6"/><rect x="881" y="761.4" width="1.6" height="1.6" fill="#8E9C72"/>
<path d="M120,749 q3,-4 6,-2 q2,-3 4,-2 l1,4 l-5,3z" fill="#E82010"/><path d="M121,749 q2,-2 5,-1 l-2,3z" fill="#F0D020"/><path d="M121,761 l12,-12" stroke="#E87020" stroke-width="1.6"/><path d="M126,752 l3,4 l1,3 h-3z" fill="#E02810"/><path d="M118,752 q2,-3 5,-1 v5 h-5z" fill="#8A8A8A" stroke="#505050" stroke-width="0.6"/>
<path d="M149,745.5 l7.5,7.5 l-7.5,7.5 l-7.5,-7.5z" fill="#fff" stroke="#202020" stroke-width="1.3"/><path d="M142,759.5 l6.5,-6 l-2.8,-0.3 l10.3,-6.2 l-6.3,5.8 l2.8,0.3z" fill="#F08A18" stroke="#C06010" stroke-width="0.4"/>
<path d="M165.5,747 l9,-1.5 v13 l-9,1.5z" fill="#E0F0FF" stroke="#1858C8" stroke-width="1.3"/><path d="M168,753 l2,3 l3,-6" stroke="#D8B040" stroke-width="1.2" fill="none"/><path d="M172,755 l7,-3" stroke="#3890E0" stroke-width="1.6"/><path d="M178,750 l3,1.5 l-2,2z" fill="#E03020"/>
<rect x="188" y="746" width="15" height="15" fill="#000"/><rect x="187" y="745" width="15" height="15" fill="#0818F0"/><rect x="190" y="745" width="1" height="5" fill="#000"/><rect x="198" y="745" width="1" height="5" fill="#000"/><rect x="191" y="745" width="7" height="5" fill="#C8C8C8"/><rect x="195" y="746" width="2" height="3" fill="#0818F0"/><rect x="188.5" y="751" width="12" height="7" fill="#fff"/><rect x="188.5" y="757.5" width="12" height="1.2" fill="#E01010"/><text x="189" y="757" font-family="Liberation Sans" font-weight="bold" font-size="7.5" fill="#E01010">X</text><text x="194.5" y="756.5" font-family="Liberation Sans" font-weight="bold" font-style="italic" font-size="6.5" fill="#101050">P</text>
<rect x="227.5" y="741.5" width="159" height="23" rx="3" fill="url(#gTask)" stroke="#C8D2AC"/>
<rect x="237" y="746" width="15" height="15" fill="#000"/><rect x="236" y="745" width="15" height="15" fill="#0818F0"/><rect x="239" y="745" width="1" height="5" fill="#000"/><rect x="247" y="745" width="1" height="5" fill="#000"/><rect x="240" y="745" width="7" height="5" fill="#C8C8C8"/><rect x="244" y="746" width="2" height="3" fill="#0818F0"/><rect x="237.5" y="751" width="12" height="7" fill="#fff"/><rect x="237.5" y="757.5" width="12" height="1.2" fill="#E01010"/><text x="238" y="757" font-family="Liberation Sans" font-weight="bold" font-size="7.5" fill="#E01010">X</text><text x="243.5" y="756.5" font-family="Liberation Sans" font-weight="bold" font-style="italic" font-size="6.5" fill="#101050">P</text>
<rect x="387.5" y="741.5" width="159" height="23" rx="3" fill="#8F9E70" stroke="#7E8C60"/>
<g transform="translate(396,741.5)"><circle cx="10" cy="11.75" r="7.2" fill="none" stroke="url(#gLogo)" stroke-width="1.7"/><path d="M7,6 h9 l-8,6.5z" fill="#1A70D8"/><path d="M6.8,6 v10.5" stroke="#06308A" stroke-width="1.4"/><path d="M8,12 l7.5,6.5" stroke="#06308A" stroke-width="1.8"/><path d="M10,10.5 l6,5.5" stroke="#E8F0FF" stroke-width="1"/></g>
<rect x="548.5" y="741.5" width="157" height="23" rx="3" fill="url(#gTask)" stroke="#C8D2AC"/>
<rect x="560.5" y="745.5" width="11" height="14" fill="#fff" stroke="#2040A0"/><rect x="556.5" y="748.5" width="8" height="8" fill="#2850C0" stroke="#102080"/><text x="557.5" y="755.5" font-family="Liberation Sans" font-weight="bold" font-size="7" fill="#fff">W</text><path d="M566,749h4M566,752h4M566,755h4" stroke="#2040A0"/>
<rect x="894" y="745" width="17" height="16" fill="#8E9C70"/>
<path d="M917.5,745.5 h12 v12 h-4 l-1,3 l-2,-3 h-5z" fill="#FFFFD8" stroke="#000" stroke-width="1.2"/><text x="920" y="756" font-family="Liberation Sans" font-weight="bold" font-size="11" fill="#00108C">?</text>
<circle cx="949.5" cy="753" r="8.5" fill="url(#gBrown)"/><path d="M951.5,749 l-4,4 l4,4" stroke="#fff" stroke-width="2.2" fill="none"/>
<path d="M964.5,745.5 h5 l3,3.5 v8 l-3,3.5 h-5 l-3,-3.5 v-8z" fill="#0818E8" stroke="#000" stroke-width="1.1"/><path d="M964,749.5 l5.5,5.5 l-2.5,2.5 v-11 l2.5,2.5 l-5.5,5.5" stroke="#F02020" stroke-width="1.4" fill="none"/>
</g>
</svg>
<div class="a t" style="left:21.7px;top:6.15px;font-size:14px;font-weight:normal;font-style:normal;color:#fff;transform:scaleX(0.912);transform-origin:0 0;text-shadow:1px 1px 0 #4F5A38;-webkit-text-stroke:0.75px #fff;">КОМПАС-3D V7 Plus</div>
<div class="a t" style="left:150.2px;top:6.15px;font-size:14px;font-weight:normal;font-style:normal;color:#fff;transform:scaleX(0.901);transform-origin:0 0;text-shadow:1px 1px 0 #4F5A38;-webkit-text-stroke:0.75px #fff;">(ЗАЩИТА) -</div>
<div class="a t" style="left:223.45px;top:6.15px;font-size:14px;font-weight:normal;font-style:normal;color:#fff;transform:scaleX(0.992);transform-origin:0 0;text-shadow:1px 1px 0 #4F5A38;-webkit-text-stroke:0.75px #fff;">[C:\Documents and Settings\Игоря\</div>
<div class="a t" style="left:441.95px;top:6.15px;font-size:14px;font-weight:normal;font-style:normal;color:#fff;transform:scaleX(1.002);transform-origin:0 0;text-shadow:1px 1px 0 #4F5A38;-webkit-text-stroke:0.75px #fff;">Метода из компаса.frw]</div>
<div class="a t" style="left:38px;top:32.69px;font-size:11px;font-weight:normal;font-style:normal;color:#000;transform:scaleX(0.939);transform-origin:0 0;">Файл</div>
<div class="a t" style="left:78.75px;top:32.69px;font-size:11px;font-weight:normal;font-style:normal;color:#000;transform:scaleX(1.022);transform-origin:0 0;">Редактор</div>
<div class="a t" style="left:143px;top:32.69px;font-size:11px;font-weight:normal;font-style:normal;color:#000;transform:scaleX(0.995);transform-origin:0 0;">Выделить</div>
<div class="a t" style="left:208.75px;top:32.69px;font-size:11px;font-weight:normal;font-style:normal;color:#000;transform:scaleX(0.891);transform-origin:0 0;">Вид</div>
<div class="a t" style="left:242.5px;top:32.69px;font-size:11px;font-weight:normal;font-style:normal;color:#000;transform:scaleX(0.970);transform-origin:0 0;">Вставка</div>
<div class="a t" style="left:298.5px;top:32.69px;font-size:11px;font-weight:normal;font-style:normal;color:#000;transform:scaleX(0.983);transform-origin:0 0;">Инструменты</div>
<div class="a t" style="left:381.75px;top:32.69px;font-size:11px;font-weight:normal;font-style:normal;color:#000;transform:scaleX(0.961);transform-origin:0 0;">Спецификация</div>
<div class="a t" style="left:471.5px;top:32.69px;font-size:11px;font-weight:normal;font-style:normal;color:#000;transform:scaleX(0.930);transform-origin:0 0;">Сервис</div>
<div class="a t" style="left:522.5px;top:32.69px;font-size:11px;font-weight:normal;font-style:normal;color:#000;transform:scaleX(1.002);transform-origin:0 0;">Окно</div>
<div class="a t" style="left:563.75px;top:32.69px;font-size:11px;font-weight:normal;font-style:normal;color:#000;transform:scaleX(0.959);transform-origin:0 0;">Справка</div>
<div class="a t" style="left:621px;top:32.69px;font-size:11px;font-weight:normal;font-style:normal;color:#000;transform:scaleX(1.018);transform-origin:0 0;">Библиотеки</div>
<div class="a t" style="left:471px;top:57.69px;font-size:11px;font-weight:normal;font-style:normal;color:#000;transform:scaleX(0.989);transform-origin:0 0;">5.0</div>
<div class="a t" style="left:562px;top:57.69px;font-size:11px;font-weight:normal;font-style:normal;color:#000;transform:scaleX(0.996);transform-origin:0 0;">Сис</div>
<div class="a t" style="left:133px;top:83.69px;font-size:11px;font-weight:normal;font-style:normal;color:#000;transform:scaleX(0.989);transform-origin:0 0;">2.0</div>
<div class="a t" style="left:820px;top:57.69px;font-size:11px;font-weight:normal;font-style:normal;color:#000;transform:scaleX(0.995);transform-origin:0 0;">-1796.9</div>
<div class="a t" style="left:871px;top:57.69px;font-size:11px;font-weight:normal;font-style:normal;color:#000;transform:scaleX(0.984);transform-origin:0 0;clip-path:inset(0 0 0 0);">1063.27</div>
<div class="a t" style="left:98.5px;top:693.00px;font-size:13px;font-weight:normal;font-style:normal;color:#000;transform:scaleX(1.073);transform-origin:0 0;">Сдвинуть</div>
<div class="a t" style="left:6px;top:721.19px;font-size:11px;font-weight:normal;font-style:normal;color:#000;transform:scaleX(1.003);transform-origin:0 0;">Нажмите левую кнопку мыши и, не отпуская, переместите изображение</div>
<div class="a t" style="left:35px;top:744.61px;font-size:17px;font-weight:bold;font-style:italic;color:#fff;transform:scaleX(0.954);transform-origin:0 0;text-shadow:1px 1px 1px #3B5226;">пуск</div>
<div class="a t" style="left:256px;top:747.69px;font-size:11px;font-weight:normal;font-style:normal;color:#000;transform:scaleX(1.015);transform-origin:0 0;">Total Commander 6.0...</div>
<div class="a t" style="left:418px;top:747.69px;font-size:11px;font-weight:normal;font-style:normal;color:#fff;transform:scaleX(0.951);transform-origin:0 0;">КОМПАС-3D V7 Plus ...</div>
<div class="a t" style="left:576px;top:747.69px;font-size:11px;font-weight:normal;font-style:normal;color:#000;transform:scaleX(1.039);transform-origin:0 0;">Метода - Microsoft ...</div>
<div class="a t" style="left:896px;top:747.69px;font-size:11px;font-weight:normal;font-style:normal;color:#fff;transform:scaleX(0.878);transform-origin:0 0;">RU</div>
<div class="a t" style="left:985px;top:747.69px;font-size:11px;font-weight:normal;font-style:normal;color:#000;transform:scaleX(1.033);transform-origin:0 0;">0:40</div>
<div class="a" style="left:38px;top:43px;width:8px;height:1px;background:#000"></div><div class="a" style="left:79px;top:43px;width:7px;height:1px;background:#000"></div><div class="a" style="left:152px;top:43px;width:7px;height:1px;background:#000"></div><div class="a" style="left:209px;top:43px;width:6px;height:1px;background:#000"></div><div class="a" style="left:262px;top:43px;width:6px;height:1px;background:#000"></div><div class="a" style="left:299px;top:43px;width:8px;height:1px;background:#000"></div><div class="a" style="left:389px;top:43px;width:7px;height:1px;background:#000"></div><div class="a" style="left:481px;top:43px;width:6px;height:1px;background:#000"></div><div class="a" style="left:523px;top:43px;width:8px;height:1px;background:#000"></div><div class="a" style="left:564px;top:43px;width:7px;height:1px;background:#000"></div><div class="a" style="left:621px;top:43px;width:7px;height:1px;background:#000"></div>
<div class="a" style="left:908px;top:54px;width:4px;height:18px;background:#fff"></div>
<svg class="a" style="left:0;top:0" width="1024" height="768" viewBox="0 0 1024 768">
<g stroke="#009696" stroke-width="6" stroke-linecap="round" stroke-linejoin="round" fill="none">
<path d="M242,537 V386 M242,311 V191 H546 M605,191 H681 V329 M681,404 V537 H529.5 M470.5,537 H394 M318,537 H242"/>
<path d="M469,191 V267 M469,342 V419"/>
<rect x="227" y="311" width="31" height="75"/>
<rect x="454" y="267" width="30" height="75"/>
<rect x="666" y="329" width="30" height="75"/>
<rect x="318" y="522" width="76" height="31"/>
<path d="M469,419 L563.41,317.60 M603.59,274.40 L681,191"/>
<circle cx="583.5" cy="296" r="29.5"/>
<path d="M242,537 L335.38,488.83 M402.82,453.77 L469,419"/>
<g transform="translate(369.1,471.3) rotate(-27.466483813939)"><rect x="-38.0" y="-15.5" width="76" height="31" fill="none"/></g>
<path d="M469,419 L511.22,441.65 M562.78,470.35 L570.80,475.52 M637.20,512.48 L681,537"/>
<g transform="translate(604,494) rotate(29.100477411543444)"><rect x="-38.0" y="-15.5" width="76" height="31" fill="none"/></g>
<g transform="translate(575.5,191.5) rotate(0)"><circle r="29.7" fill="none"/><line x1="-22" y1="0" x2="4" y2="0"/><polygon points="3.6,-6.5 20.6,0 3.6,6.5" fill="#009696"/></g>
<g transform="translate(500,537.4) rotate(0)"><circle r="29.7" fill="none"/><line x1="-22" y1="0" x2="4" y2="0"/><polygon points="3.6,-6.5 20.6,0 3.6,6.5" fill="#009696"/></g>
<g transform="translate(537,456) rotate(209.10047741154344)"><circle r="29.7" fill="none"/><line x1="-22" y1="0" x2="4" y2="0"/><polygon points="3.6,-6.5 20.6,0 3.6,6.5" fill="#009696"/></g>
</g>
<g fill="#009696">
<circle cx="469.5" cy="191.5" r="10"/>
<circle cx="681.5" cy="191.5" r="10"/>
<circle cx="242" cy="538" r="10"/>
<circle cx="469.5" cy="419" r="10"/>
<circle cx="681.5" cy="538" r="10"/>
</g>
<g fill="#000"><rect x="472" y="194" width="1" height="1"/><rect x="465" y="416" width="1" height="1"/><rect x="468" y="422" width="3" height="1"/></g>
<g stroke="#000" stroke-width="1" fill="none"><path d="M682.5,188.5 h1 l1,1 v4"/><path d="M233.5,537.5 v1 l2,2 h3"/><path d="M678.5,540.5 h3 l2,-2 v-3"/></g>
<g font-family="Liberation Serif" font-style="italic" fill="#000" stroke="#fff" stroke-width="0.5">
<text transform="matrix(0.9184,0,-0.0000,1,253.49,296.00)" font-size="59.56">R</text>
<text transform="matrix(0.9564,0,-0.0574,1,287.03,312.32)" font-size="39.14" stroke-width="0.35">6</text>
<text transform="matrix(0.8932,0,-0.0000,1,395.99,302.00)" font-size="59.56">R</text>
<text transform="matrix(0.9029,0,-0.0542,1,429.59,318.00)" font-size="39.50" stroke-width="0.35">4</text>
<text transform="matrix(0.9607,0,-0.0000,1,502.27,240.00)" font-size="59.56">E</text>
<text transform="matrix(0.8480,0,-0.0678,1,535.10,256.70)" font-size="39.84" stroke-width="0.35">1</text>
<text transform="matrix(0.9072,0,-0.0000,1,608.69,375.00)" font-size="59.56">R</text>
<text transform="matrix(0.8710,0,-0.0697,1,642.79,390.80)" font-size="39.08" stroke-width="0.35">1</text>
<text transform="matrix(0.9044,0,-0.0000,1,364.49,422.00)" font-size="59.56">R</text>
<text transform="matrix(0.8565,0,-0.0514,1,397.86,438.42)" font-size="38.82" stroke-width="0.35">5</text>
<text transform="matrix(0.9607,0,-0.0000,1,514.97,407.00)" font-size="59.56">E</text>
<text transform="matrix(0.8908,0,-0.0534,1,548.48,422.80)" font-size="38.97" stroke-width="0.35">2</text>
<text transform="matrix(0.8792,0,-0.0000,1,622.38,478.00)" font-size="59.56">R</text>
<text transform="matrix(0.8708,0,-0.0522,1,655.78,493.80)" font-size="38.97" stroke-width="0.35">2</text>
<text transform="matrix(0.8904,0,-0.0000,1,278.88,584.00)" font-size="59.56">R</text>
<text transform="matrix(0.8352,0,-0.0501,1,313.21,600.33)" font-size="38.25" stroke-width="0.35">3</text>
<text transform="matrix(0.9468,0,-0.0000,1,525.36,583.00)" font-size="59.56">E</text>
<text transform="matrix(0.8059,0,-0.0484,1,559.31,598.42)" font-size="38.40" stroke-width="0.35">3</text>
<text transform="matrix(0.7943,0,-0.2145,1,559.56,315.19)" font-size="60.31">V</text>
</g></svg>
</body></html>
